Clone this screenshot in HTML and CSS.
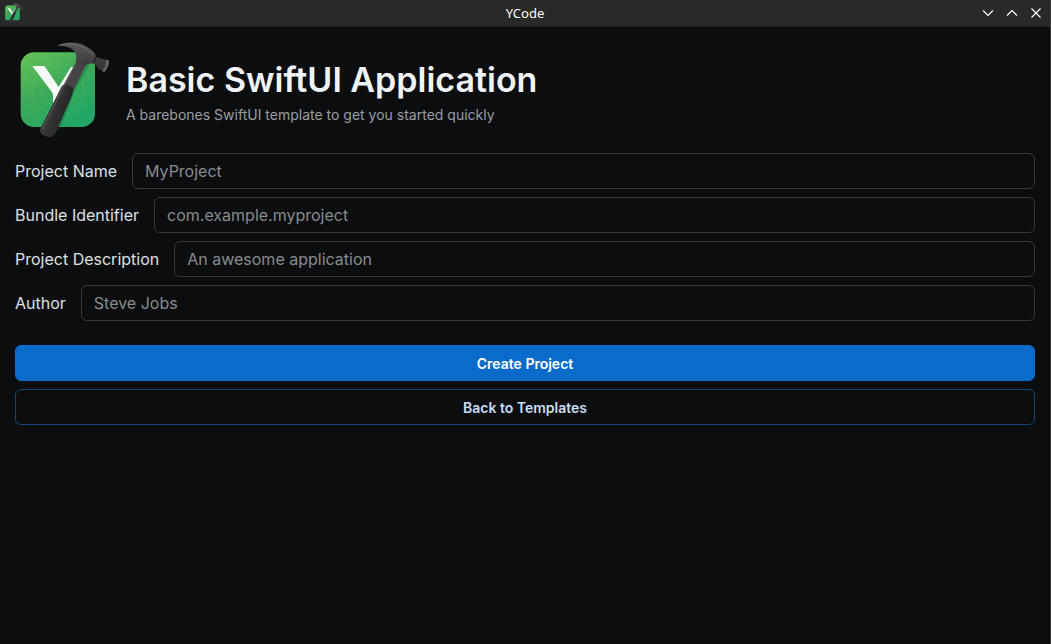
FILE: index.html
```html
<!DOCTYPE html>
<html lang="en">
<head>
<meta charset="utf-8">
<title>YCode</title>
<link rel="stylesheet" href="styles.css">
</head>
<body>
<svg width="0" height="0" class="defs" aria-hidden="true">
  <defs>
    <linearGradient id="tile" x1="0" y1="0" x2="0.6" y2="1">
      <stop offset="0" stop-color="#68c458"/>
      <stop offset="0.5" stop-color="#3fab58"/>
      <stop offset="1" stop-color="#22a665"/>
    </linearGradient>
    <linearGradient id="grip" x1="0" y1="0" x2="1" y2="0.4">
      <stop offset="0" stop-color="#454444"/>
      <stop offset="0.5" stop-color="#353434"/>
      <stop offset="1" stop-color="#222"/>
    </linearGradient>
    <linearGradient id="head" x1="0" y1="0" x2="0.3" y2="1">
      <stop offset="0" stop-color="#5c5c5d"/>
      <stop offset="1" stop-color="#363637"/>
    </linearGradient>
    <symbol id="logo" viewBox="45 27 288 306">
      <rect x="62" y="67" width="223" height="224" rx="40" fill="url(#tile)"/>
      <g fill="none" stroke="#8fdc8c" stroke-opacity="0.22" stroke-width="2">
        <circle cx="174" cy="178" r="77"/>
        <circle cx="174" cy="178" r="50"/>
      </g>
      <path d="M97 108h32q5 0 8 5l39 58 37-60h20l-60 110h-14v-24q0-6-4-12z" fill="#f5faf6"/>
      <path d="M244 98l24 8-44 80-44 112-20 16-10-4 50-130z" fill="#0b5a31" fill-opacity="0.3"/>
      <path d="M229 94l30 8-38 78-32-12z" fill="#454444"/>
      <path d="M186 167q15-7 35 7l-4 20-51 117q-7 13-24 9-24-5-22-22z" fill="url(#grip)"/>
      <path d="M229 98l-38 72-64 128" fill="none" stroke="#6a6868" stroke-width="4" stroke-opacity="0.5"/>
      <path d="M171 47q14-8 30-9 38-2 61 13 15 9 23 18l3 11 15 6 23 5q3 8-5 24-4 8-9 11l-17-10-10-13-12-3-16 6-30-7q5-25-4-35-10-12-30-15-12-2-23-2z" fill="url(#head)"/>
      <path d="M181 44q47-8 77 13l23 18" fill="none" stroke="#7b7b7c" stroke-width="4" stroke-opacity="0.5"/>
      <path d="M326 91q3 8-5 24-4 8-9 11l-5-3q12-14 11-34z" fill="#656465"/>
      <path d="M288 80l-8 19" fill="none" stroke="#252525" stroke-width="4"/>
    </symbol>
  </defs>
</svg>
<div class="window">
  <header class="titlebar">
    <svg class="titlebar-logo" aria-hidden="true"><use href="#logo"/></svg>
    <span class="titlebar-title">YCode</span>
    <div class="controls">
      <button type="button" aria-label="Minimize"><svg viewBox="0 0 12 12"><path d="M1 3.5l5 5 5-5"/></svg></button>
      <button type="button" aria-label="Maximize"><svg viewBox="0 0 12 12"><path d="M1 8.5l5-5 5 5"/></svg></button>
      <button type="button" aria-label="Close"><svg viewBox="0 0 12 12"><path d="M1.5 1.5l9 9m0-9l-9 9"/></svg></button>
    </div>
  </header>
  <main class="content">
    <div class="intro">
      <svg class="logo" role="img" aria-label="YCode logo"><use href="#logo"/></svg>
      <div>
        <h1>Basic SwiftUI Application</h1>
        <p>A barebones SwiftUI template to get you started quickly</p>
      </div>
    </div>
    <form class="form">
      <div class="field"><label for="name">Project Name</label><input id="name" type="text" placeholder="MyProject"></div>
      <div class="field"><label for="bundle">Bundle Identifier</label><input id="bundle" type="text" placeholder="com.example.myproject"></div>
      <div class="field"><label for="description">Project Description</label><input id="description" type="text" placeholder="An awesome application"></div>
      <div class="field"><label for="author">Author</label><input id="author" type="text" placeholder="Steve Jobs"></div>
      <div class="actions">
        <button type="button" class="btn primary">Create Project</button>
        <button type="button" class="btn outlined">Back to Templates</button>
      </div>
    </form>
  </main>
</div>
</body>
</html>
```
FILE: styles.css
```css
* { box-sizing: border-box; }
body {
  margin: 0;
  background: #0b0d0e;
  color: #cdd7e1;
  font-family: Inter, sans-serif;
  font-size: 16px;
  line-height: 24px;
}
.defs { position: absolute; }
.window {
  min-height: 100vh;
  border-right: 1px solid #3a3b3c;
}
.titlebar {
  display: grid;
  grid-template-columns: 1fr auto 1fr;
  align-items: center;
  height: 27px;
  padding: 0 4px;
  background: #292929;
  border-bottom: 1px solid #202020;
}
.titlebar-logo { width: 19px; height: 20px; }
.titlebar-title {
  color: #fcfcfc;
  font-family: "Noto Sans", sans-serif;
  font-size: 13px;
}
.controls {
  display: flex;
  justify-content: flex-end;
  gap: 12px;
  padding-right: 4px;
}
.controls button {
  display: flex;
  padding: 0;
  border: 0;
  background: none;
}
.controls svg {
  width: 12px;
  height: 12px;
  fill: none;
  stroke: #fcfcfc;
  stroke-width: 1.2;
}
.content { padding: 12px 15px; }
.intro {
  display: flex;
  align-items: center;
  gap: 15px;
}
.logo {
  width: 96px;
  height: 102px;
}
h1 {
  margin: 0;
  color: #f0f4f8;
  font-size: 34px;
  font-weight: 600;
  line-height: 48px;
}
p {
  margin: 0;
  color: #9a9fa3;
  font-size: 14px;
  line-height: 21px;
}
.form {
  display: flex;
  flex-direction: column;
  gap: 8px;
  margin-top: 12px;
}
.field {
  display: flex;
  align-items: center;
  gap: 15px;
}
.field label { color: #dde1e5; }
.field input {
  flex: 1;
  min-width: 0;
  height: 36px;
  padding: 0 12px;
  border: 1px solid #32383e;
  border-radius: 6px;
  background: #0b0d0e;
  color: #cdd7e1;
  font: inherit;
}
.field input::placeholder {
  color: #878c8f;
  opacity: 1;
}
.actions {
  display: grid;
  gap: 8px;
  margin-top: 16px;
}
.btn {
  height: 36px;
  border: 1px solid #0b6bcb;
  border-radius: 6px;
  font: 600 14px/21px Inter, sans-serif;
}
.primary {
  background: #0b6bcb;
  color: #fff;
}
.outlined {
  border-color: #12467b;
  background: transparent;
  color: #c7dff7;
}
```
